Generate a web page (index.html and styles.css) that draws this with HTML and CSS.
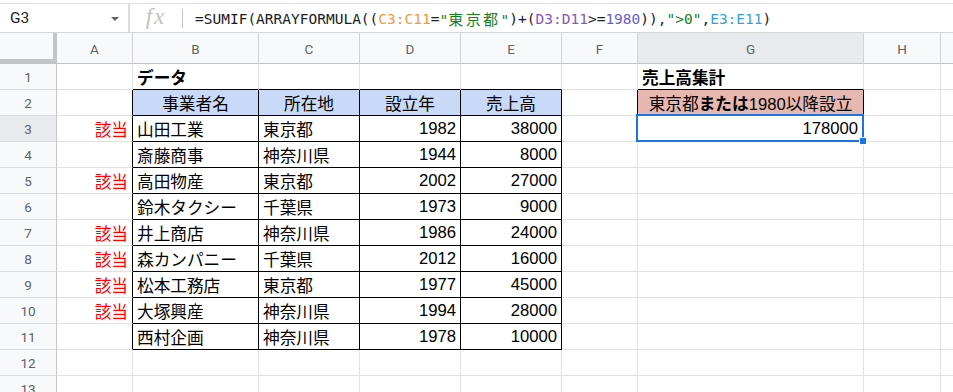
FILE: index.html
```html
<!DOCTYPE html>
<html lang="ja">
<head>
<meta charset="utf-8">
<title>Sheet</title>
<link rel="stylesheet" href="styles.css">
</head>
<body>
<div class="app">
  <div class="topline"></div>
  <div class="fbar">
    <div class="namebox"><span class="ref">G3</span><span class="caret"></span></div>
    <div class="fx-area"><span class="fx">fx</span></div>
    <div class="fsep"></div>
    <div class="formula">=SUMIF(ARRAYFORMULA((<span class="k1">C3:C11</span>=<span class="str">"<span class="cjk">東京都</span>"</span>)+(<span class="k2">D3:D11</span>&gt;=<span class="num">1980</span>)),<span class="str">"&gt;0"</span>,<span class="k3">E3:E11</span>)</div>
  </div>
  <div class="grid">
    <div class="corner"></div>
    <div class="ch">A</div><div class="ch">B</div><div class="ch">C</div><div class="ch">D</div><div class="ch">E</div><div class="ch">F</div><div class="ch ch-sel">G</div><div class="ch">H</div><div class="ch"></div>

    <div class="rh">1</div>
    <div class="c"></div><div class="c bb bold">データ</div><div class="c bb"></div><div class="c bb"></div><div class="c bb"></div><div class="c"></div><div class="c bb bold">売上高集計</div><div class="c"></div><div class="c"></div>

    <div class="rh">2</div>
    <div class="c br"></div><div class="c t hd m">事業者名</div><div class="c t hd m">所在地</div><div class="c t hd m">設立年</div><div class="c t hd m">売上高</div><div class="c br"></div><div class="c t pk m">東京都<b>または</b>1980以降設立</div><div class="c"></div><div class="c"></div>

    <div class="rh rh-sel">3</div>
    <div class="c br r red">該当</div><div class="c t">山田工業</div><div class="c t">東京都</div><div class="c t r">1982</div><div class="c t r">38000</div><div class="c"></div><div class="c r selcell">178000<span class="sel"></span><span class="handle"></span></div><div class="c"></div><div class="c"></div>

    <div class="rh">4</div>
    <div class="c br"></div><div class="c t">斎藤商事</div><div class="c t">神奈川県</div><div class="c t r">1944</div><div class="c t r">8000</div><div class="c"></div><div class="c"></div><div class="c"></div><div class="c"></div>

    <div class="rh">5</div>
    <div class="c br r red">該当</div><div class="c t">高田物産</div><div class="c t">東京都</div><div class="c t r">2002</div><div class="c t r">27000</div><div class="c"></div><div class="c"></div><div class="c"></div><div class="c"></div>

    <div class="rh">6</div>
    <div class="c br"></div><div class="c t">鈴木タクシー</div><div class="c t">千葉県</div><div class="c t r">1973</div><div class="c t r">9000</div><div class="c"></div><div class="c"></div><div class="c"></div><div class="c"></div>

    <div class="rh">7</div>
    <div class="c br r red">該当</div><div class="c t">井上商店</div><div class="c t">神奈川県</div><div class="c t r">1986</div><div class="c t r">24000</div><div class="c"></div><div class="c"></div><div class="c"></div><div class="c"></div>

    <div class="rh">8</div>
    <div class="c br r red">該当</div><div class="c t">森カンパニー</div><div class="c t">千葉県</div><div class="c t r">2012</div><div class="c t r">16000</div><div class="c"></div><div class="c"></div><div class="c"></div><div class="c"></div>

    <div class="rh">9</div>
    <div class="c br r red">該当</div><div class="c t">松本工務店</div><div class="c t">東京都</div><div class="c t r">1977</div><div class="c t r">45000</div><div class="c"></div><div class="c"></div><div class="c"></div><div class="c"></div>

    <div class="rh">10</div>
    <div class="c br r red">該当</div><div class="c t">大塚興産</div><div class="c t">神奈川県</div><div class="c t r">1994</div><div class="c t r">28000</div><div class="c"></div><div class="c"></div><div class="c"></div><div class="c"></div>

    <div class="rh">11</div>
    <div class="c br"></div><div class="c t">西村企画</div><div class="c t">神奈川県</div><div class="c t r">1978</div><div class="c t r">10000</div><div class="c"></div><div class="c"></div><div class="c"></div><div class="c"></div>

    <div class="rh">12</div>
    <div class="c"></div><div class="c"></div><div class="c"></div><div class="c"></div><div class="c"></div><div class="c"></div><div class="c"></div><div class="c"></div><div class="c"></div>

    <div class="rh">13</div>
    <div class="c"></div><div class="c"></div><div class="c"></div><div class="c"></div><div class="c"></div><div class="c"></div><div class="c"></div><div class="c"></div><div class="c"></div>
  </div>
</div>
</body>
</html>
```
FILE: styles.css
```css
* { box-sizing: border-box; }
html, body {
  margin: 0;
  padding: 0;
  background: #fff;
  width: 953px;
  height: 392px;
  overflow: hidden;
}
.app {
  width: 953px;
  height: 392px;
  overflow: hidden;
  font-family: Roboto, "Liberation Sans", "Noto Sans CJK JP", sans-serif;
}
.topline {
  margin-top: 3px;
  border-top: 1px solid #e3e3e3;
}
.fbar {
  height: 29px;
  display: flex;
  align-items: stretch;
  border-bottom: 1px solid #d5d5d5;
}
.namebox {
  width: 130px;
  display: flex;
  align-items: center;
  padding-left: 10px;
  padding-right: 8px;
  border-right: 2px solid #dcdcdc;
}
.ref {
  font-size: 15.5px;
  color: #202124;
  flex: 1;
}
.caret {
  width: 0;
  height: 0;
  border-left: 4px solid transparent;
  border-right: 4px solid transparent;
  border-top: 4px solid #606368;
  margin-top: 2px;
  margin-right: 1px;
}
.fx-area {
  width: 52px;
  display: flex;
  align-items: center;
  justify-content: center;
}
.fx {
  font-family: "Liberation Serif", serif;
  font-style: italic;
  font-size: 23px;
  letter-spacing: 2px;
  color: #c2c2c2;
  margin-top: -2px;
}
.fsep {
  width: 1px;
  margin: 5px 0 4px;
  background: #c6c6c6;
}
.formula {
  padding-left: 12px;
  display: flex;
  align-items: center;
  font-family: "DejaVu Sans Mono", monospace;
  font-size: 14.5px;
  color: #202124;
  white-space: pre;
  padding-top: 1px;
}
.formula .cjk {
  font-family: "Noto Sans CJK JP", sans-serif;
  font-size: 15px;
  letter-spacing: 2.46px;
}
.k1 { color: #f5993a; }
.k2 { color: #8a55c4; }
.num { color: #6a5cc9; }
.k3 { color: #3a9fd4; }
.str { color: #18801e; }

.grid {
  display: grid;
  grid-template-columns: 57px 76px 126px 101px 101px 101px 76px 226px 77px 40px;
  grid-template-rows: 31px;
  grid-auto-rows: 26px;
}
.corner {
  background: #f8f9fa;
  border-right: 4px solid #c2c4c6;
  border-bottom: 5px solid #c2c4c6;
}
.ch {
  background: #f8f9fa;
  border-right: 1px solid #d3d3d3;
  border-bottom: 1px solid #c4c4c4;
  display: flex;
  align-items: center;
  justify-content: center;
  font-size: 13.5px;
  color: #5f6368;
  padding-top: 1px;
}
.ch-sel { background: #e8eaed; }
.rh {
  background: #f8f9fa;
  border-right: 1px solid #c4c4c4;
  border-bottom: 1px solid #dcdcdc;
  display: flex;
  align-items: center;
  justify-content: center;
  font-size: 13.5px;
  color: #5f6368;
}
.rh-sel { background: #e8eaed; }
.c {
  border-right: 1px solid #e2e2e2;
  border-bottom: 1px solid #e2e2e2;
  display: flex;
  align-items: center;
  padding: 0 4px 0 4px;
  font-family: "Liberation Sans", "Noto Sans CJK JP", sans-serif;
  font-size: 16.67px;
  color: #000;
  white-space: nowrap;
  position: relative;
}
.c b { font-weight: 700; }
.t { border-right-color: #000; border-bottom-color: #000; }
.bb { border-bottom-color: #000; }
.br { border-right-color: #000; }
.r { justify-content: flex-end; }
.m { justify-content: center; }
.bold { font-weight: 700; }
.red { color: #ff0000; }
.hd { background: #c9daf8; }
.pk { background: #e6b8af; border-right-color: #000; border-bottom-color: #000; }
.selcell { padding-right: 5px; }
.sel {
  position: absolute;
  left: -2px;
  top: -2px;
  right: -1px;
  bottom: -1px;
  border: 2px solid #1a73e8;
  pointer-events: none;
}
.handle {
  position: absolute;
  right: -4px;
  bottom: -4px;
  width: 8px;
  height: 8px;
  background: #1a73e8;
  border: 1px solid #fff;
  z-index: 2;
}
```
